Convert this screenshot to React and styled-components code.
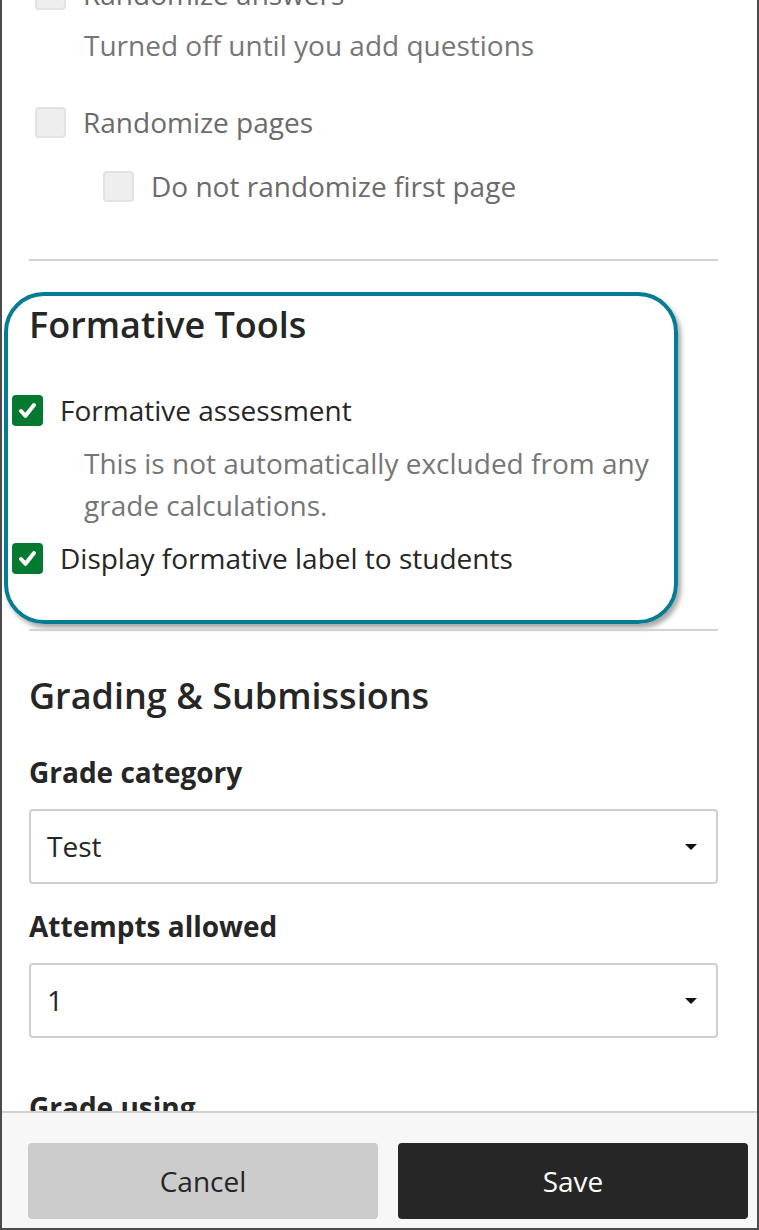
import React from "react";
import styled, { createGlobalStyle } from "styled-components";

const Global = createGlobalStyle`
  html, body { margin: 0; padding: 0; background: #ffffff; }
  body { font-family: "Open Sans", "Liberation Sans", sans-serif; color: #262626; }
  * { box-sizing: border-box; }
`;

const Frame = styled.div`
  width: 759px;
  height: 1230px;
  border: 2px solid #4b4b4b;
  border-top: none;
  display: flex;
  flex-direction: column;
  background: #ffffff;
  overflow: hidden;
`;

const ScrollArea = styled.div`
  flex: 1;
  overflow: hidden;
  padding: 0 39px 0 27px;
`;

const Body = styled.div`
  margin-top: -26px;
  display: flex;
  flex-direction: column;
`;

const Row = styled.label`
  display: flex;
  align-items: center;
  gap: 17px;
  margin-top: ${(p) => p.$mt || 0}px;
  padding-left: ${(p) => p.$indent || 0}px;
  font-size: 28px;
  line-height: 41px;
  color: ${(p) => (p.$muted ? "#6b6b6b" : "#262626")};
`;

const Box = styled.span`
  flex: none;
  width: 31px;
  height: 31px;
  border-radius: 4px;
  display: flex;
  align-items: center;
  justify-content: center;
  background: ${(p) => (p.$checked ? "#04792f" : "#eeeeee")};
  border: ${(p) => (p.$checked ? "none" : "2px solid #e2e2e2")};
`;

const Hint = styled.p`
  margin: ${(p) => p.$mt || 0}px 0 0 ${(p) => p.$indent || 0}px;
  font-size: 28px;
  line-height: 42px;
  color: #767676;
`;

const Divider = styled.hr`
  margin: ${(p) => p.$mt || 0}px 0 0;
  border: none;
  height: 2px;
  background: #d2d2d2;
`;

const Highlight = styled.section`
  margin: 31px 0 0 -25px;
  width: 674px;
  border: 4px solid #047d93;
  border-radius: 40px;
  box-shadow: 3px 4px 5px rgba(0, 0, 0, 0.35);
  padding: 7px 0 41px 4px;
  display: flex;
  flex-direction: column;
`;

const Heading = styled.h2`
  margin: ${(p) => p.$mt || 0}px 0 0;
  padding-left: ${(p) => p.$indent || 0}px;
  font-size: 36px;
  line-height: 44px;
  font-weight: 600;
  color: #262626;
`;

const FieldLabel = styled.div`
  margin-top: ${(p) => p.$mt || 0}px;
  font-size: 28px;
  line-height: 41px;
  font-weight: 700;
  color: #262626;
`;

const Select = styled.div`
  margin-top: 16px;
  height: 75px;
  border: 2px solid #cfcfcf;
  border-radius: 4px;
  display: flex;
  align-items: center;
  justify-content: space-between;
  padding: 0 19px 0 16px;
  font-size: 28px;
  line-height: 41px;
  color: #262626;
`;

const Caret = styled.span`
  width: 0;
  height: 0;
  border-left: 6px solid transparent;
  border-right: 6px solid transparent;
  border-top: 6px solid #111111;
`;

const Footer = styled.footer`
  flex: none;
  background: #f7f7f7;
  border-top: 2px solid #d0d0d0;
  padding: 30px 9px 9px 26px;
  display: grid;
  grid-template-columns: 1fr 1fr;
  gap: 20px;
`;

const Button = styled.button`
  height: 76px;
  border: none;
  border-radius: 4px;
  font-family: "Open Sans", "Liberation Sans", sans-serif;
  font-size: 28px;
  background: ${(p) => (p.$primary ? "#262626" : "#cccccc")};
  color: ${(p) => (p.$primary ? "#ffffff" : "#262626")};
`;

const Check = () => (
  <svg width="31" height="31" viewBox="0 0 31 31" fill="none">
    <path
      d="M9 16 L13.5 20.8 L22 10"
      stroke="#ffffff"
      strokeWidth="4"
      strokeLinecap="round"
      strokeLinejoin="round"
    />
  </svg>
);

const CheckRow = ({ checked, children, ...rest }) => (
  <Row {...rest}>
    <Box $checked={checked}>{checked && <Check />}</Box>
    <span>{children}</span>
  </Row>
);

export default function App() {
  return (
    <>
      <Global />
      <Frame>
        <ScrollArea>
          <Body>
            <CheckRow $indent={6} $muted>Randomize answers</CheckRow>
            <Hint $mt={9} $indent={55}>Turned off until you add questions</Hint>
            <CheckRow $indent={6} $mt={36} $muted>Randomize pages</CheckRow>
            <CheckRow $indent={74} $mt={23} $muted>Do not randomize first page</CheckRow>
            <Divider $mt={52} />

            <Highlight>
              <Heading $indent={17}>Formative Tools</Heading>
              <CheckRow checked $mt={43}>Formative assessment</CheckRow>
              <Hint $mt={11} $indent={72}>
                This is not automatically excluded from any grade calculations.
              </Hint>
              <CheckRow checked $mt={12}>Display formative label to students</CheckRow>
            </Highlight>

            <Divider $mt={5} />
            <Heading $mt={43}>Grading &amp; Submissions</Heading>

            <FieldLabel $mt={34}>Grade category</FieldLabel>
            <Select>
              <span>Test</span>
              <Caret />
            </Select>

            <FieldLabel $mt={22}>Attempts allowed</FieldLabel>
            <Select>
              <span>1</span>
              <Caret />
            </Select>

            <FieldLabel $mt={49}>Grade using</FieldLabel>
          </Body>
        </ScrollArea>
        <Footer>
          <Button>Cancel</Button>
          <Button $primary>Save</Button>
        </Footer>
      </Frame>
    </>
  );
}
